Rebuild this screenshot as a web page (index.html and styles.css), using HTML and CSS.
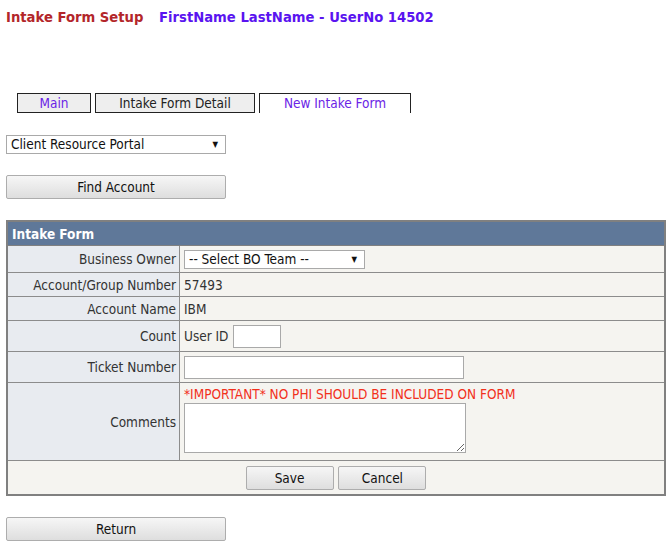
FILE: index.html
```html
<!DOCTYPE html>
<html lang="en">
    <head>
        <title>Intake Form Setup</title>
        <meta charset="UTF-8">
        <link rel="stylesheet" href="styles.css">
    </head>
    <body>
        <div class="page-title">
            <span class="title-app">Intake Form Setup</span>
            <span class="title-user">FirstName LastName - UserNo 14502</span>
        </div>

        <div class="tabs">
            <a class="tab tab-main">Main</a>
            <a class="tab">Intake Form Detail</a>
            <a class="tab tab-active">New Intake Form</a>
        </div>

        <div class="select-box select-portal">Client Resource Portal<span class="arrow">&#9660;</span></div>

        <button type="button" class="button button-wide button-find">Find Account</button>

        <table class="form-table">
            <thead>
                <tr>
                    <th colspan="2">Intake Form</th>
                </tr>
            </thead>
            <tbody>
                <tr class="row-bo">
                    <td class="label">Business Owner</td>
                    <td class="value"><div class="select-box select-bo">-- Select BO Team --<span class="arrow">&#9660;</span></div></td>
                </tr>
                <tr class="row-acc">
                    <td class="label">Account/Group Number</td>
                    <td class="value">57493</td>
                </tr>
                <tr class="row-name">
                    <td class="label">Account Name</td>
                    <td class="value">IBM</td>
                </tr>
                <tr class="row-count">
                    <td class="label">Count</td>
                    <td class="value">User ID <input type="text" class="input-small"></td>
                </tr>
                <tr class="row-ticket">
                    <td class="label">Ticket Number</td>
                    <td class="value"><input type="text" class="input-ticket"></td>
                </tr>
                <tr class="row-comments">
                    <td class="label">Comments</td>
                    <td class="value">
                        <div class="warning">*IMPORTANT* NO PHI SHOULD BE INCLUDED ON FORM</div>
                        <textarea class="comments"></textarea>
                    </td>
                </tr>
                <tr class="row-actions">
                    <td colspan="2">
                        <button type="button" class="button button-save">Save</button>
                        <button type="button" class="button button-cancel">Cancel</button>
                    </td>
                </tr>
            </tbody>
        </table>

        <button type="button" class="button button-wide button-return">Return</button>
    </body>
</html>
```

FILE: styles.css
```css
body{
    margin: 0;
    padding: 0 6px;
    font-family: "DejaVu Sans Condensed", "DejaVu Sans", Verdana, sans-serif;
    font-size: 13.5px;
    color: #333;
    background: #fff;
}

.page-title{
    padding-top: 10px;
    height: 17px;
    font-family: "DejaVu Sans", Verdana, sans-serif;
    font-size: 13.2px;
    font-weight: bold;
}

.title-app{
    color: #b3262a;
}

.title-user{
    color: #5a14f0;
    margin-left: 11px;
}

.tabs{
    margin-top: 66px;
    padding-left: 11px;
    display: flex;
    gap: 4px;
    height: 20px;
}

.tab{
    display: block;
    box-sizing: border-box;
    height: 20px;
    line-height: 18px;
    text-align: center;
    border: 1px solid #222;
    background: #eee;
    color: #222;
    width: 160px;
}

.tab-main{
    width: 74px;
    color: #6b24e6;
}

.tab-active{
    width: 152px;
    background: #fff;
    border-bottom: none;
    height: 20px;
    color: #6b24e6;
}

.select-box{
    box-sizing: border-box;
    position: relative;
    border: 1px solid #a9a9a9;
    background: #fff;
    color: #111;
    height: 19px;
    line-height: 17px;
    padding-left: 4px;
}

.select-box .arrow{
    position: absolute;
    right: 7px;
    top: 0;
    font-size: 8px;
}

.select-portal{
    width: 220px;
    margin-top: 22px;
}

.select-bo{
    width: 181px;
}

.button{
    box-sizing: border-box;
    font-family: "DejaVu Sans Condensed", "DejaVu Sans", Verdana, sans-serif;
    font-size: 13.5px;
    color: #111;
    border: 1px solid #adadad;
    border-radius: 2px;
    background: linear-gradient(to bottom, #f6f6f6, #dedede);
    height: 24px;
    padding: 0;
    display: block;
}

.button-wide{
    width: 220px;
}

.button-find{
    margin-top: 21px;
}

.form-table{
    margin-top: 21px;
    width: 660px;
    border-collapse: collapse;
    border: 2px solid #808080;
}

.form-table th{
    background: #5f7899;
    color: #fff;
    text-align: left;
    font-weight: bold;
    padding: 0 4px;
    height: 23px;
    border: 1px solid #808080;
}

.form-table td{
    border: 1px solid #8c8c8c;
    padding: 0 4px;
}

.form-table .label{
    background: #e8ebf0;
    text-align: right;
    width: 164px;
    color: #333;
    padding-right: 3px;
}

.form-table .value{
    background: #f5f4f0;
}

.row-bo td{ height: 26px; }
.row-acc td{ height: 23px; }
.row-name td{ height: 23px; }
.row-count td{ height: 30px; }
.row-ticket td{ height: 30px; }
.row-comments td{ height: 76px; }

.input-small{
    box-sizing: border-box;
    width: 48px;
    height: 23px;
    border: 1px solid #a9a9a9;
    vertical-align: middle;
    margin: 0 0 0 1px;
}

.input-ticket{
    box-sizing: border-box;
    width: 280px;
    height: 23px;
    border: 1px solid #a9a9a9;
    display: block;
}

.warning{
    color: #f2301c;
    margin-top: 3px;
    line-height: 16px;
}

.comments{
    box-sizing: border-box;
    width: 282px;
    height: 50px;
    border: 1px solid #a9a9a9;
    display: block;
    margin: 1px 0 7px;
    resize: both;
}

.row-actions td{
    background: #f5f4f0;
    height: 33px;
    text-align: center;
}

.row-actions .button{
    display: inline-block;
    vertical-align: middle;
}

.button-save{
    width: 88px;
}

.button-cancel{
    width: 88px;
    margin-left: 1px;
}

.button-return{
    margin-top: 21px;
}
```
